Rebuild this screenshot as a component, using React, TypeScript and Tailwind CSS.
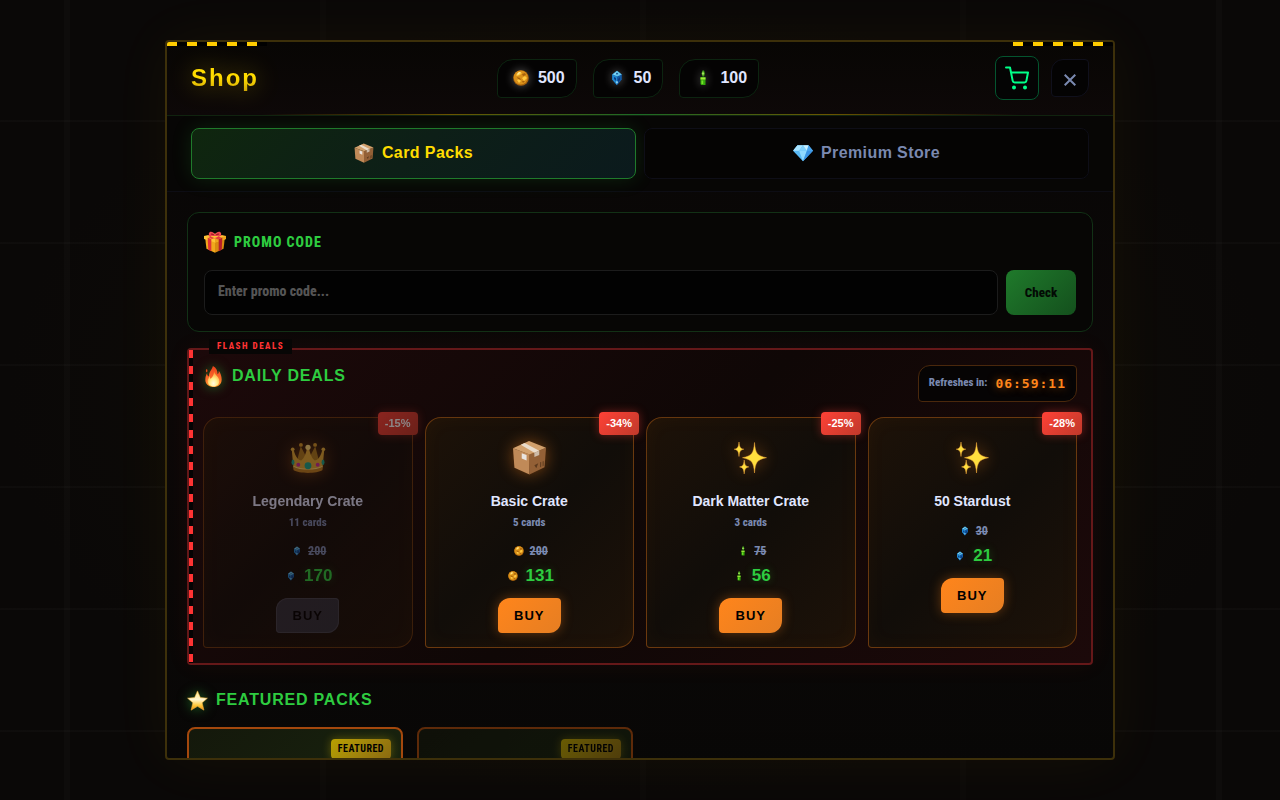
import type { ReactNode } from "react";

type Currency = "coin" | "crystal" | "vial";
type Art = "crown" | "box" | "sparkles";

const narrow = "font-['Roboto_Condensed','Liberation_Sans_Narrow','Liberation_Sans',sans-serif]";

function CurrencyIcon({ kind, className }: { kind: Currency; className: string }) {
  return (
    <svg viewBox="0 0 16 16" className={className} aria-hidden="true">
      {kind === "coin" && (
        <g>
          <circle cx="8" cy="8" r="7.800" fill="#a8620c" />
          <circle cx="7.700" cy="7.500" r="7" fill="#d9901a" />
          <path d="M3 5l3-3 3 1-2 2-3 1zM9 8l3-2 2 2-3 3zM4 10l2-1 2 2-2 2z" fill="#ffc83f" />
          <path d="M4 7l3 1 1 2-3-1zM9 4l3-1 1 2-3 1zM9 11l3 0-2 2z" fill="#a8620c" />
          <path d="M4 4l2-2 2 0-3 3z" fill="#ffeb9c" />
        </g>
      )}
      {kind === "crystal" && (
        <g>
          <path d="M8 .800l4.800 3.700v5L8 15.200 3.200 9.500v-5z" fill="#1159a4" />
          <path d="M8 .800l4.800 3.700L8 6.500 3.200 4.500z" fill="#62c4ea" />
          <path d="M3.200 4.500L8 6.500v8.700L3.200 9.500z" fill="#2288cf" />
          <path d="M5 7l2 1v3L5 9zM9 9l2-2v3l-2 2zM7 3l2 0-1 2z" fill="#0b3a80" />
          <path d="M5 4l2-1-1 2zM7 12l1-1 1 1-1 2z" fill="#a8ecff" />
        </g>
      )}
      {kind === "vial" && (
        <g>
          <path d="M7.500.500h1.500l1 3-1 3h-1.500l-1-3z" fill="#3f9a18" />
          <path d="M8 1.500l.900 2-.900 2-.900-2z" fill="#b8f26a" />
          <path d="M5.500 7h5v8H6.200l-.7-1z" fill="#35a80c" />
          <path d="M5.500 7.500h5v2h-5z" fill="#a2e83a" />
          <path d="M6.500 10.500h1.700v3.500H6.500z" fill="#76e32a" />
        </g>
      )}
    </svg>
  );
}

function BoxIcon({ className }: { className: string }) {
  return (
    <svg viewBox="0 0 36 36" className={className} aria-hidden="true">
      <path d="M1 8.500L18 15v20.500L2.500 28.500z" fill="#c08a58" />
      <path d="M18 15L35 8l-1.500 20L18 35.500z" fill="#936036" />
      <path d="M1 8.500L17.500 1 35 8l-17 7z" fill="#d2a06c" />
      <path d="M9 5l4-2 15 8-5 2z" fill="#eadccb" />
      <path d="M23 13l5-2v4.500l-5 2z" fill="#cdbba8" />
      <path d="M10 13.500l5 2v5.500l-5-2z" fill="#e9e4df" />
      <path d="M23 26l4-2-2 5zM29 23l1-.5v5l-1 .5zM31.500 22l1-.5v5l-1 .5z" fill="#5c3a1e" />
    </svg>
  );
}

function DiamondIcon({ className }: { className: string }) {
  return (
    <svg viewBox="0 0 36 32" className={className} aria-hidden="true">
      <path d="M8 2h20l8 10-18 19L0 12z" fill="#58b9f5" />
      <path d="M8 2l10 0-7 10H0z" fill="#a8e4ff" />
      <path d="M18 2l7 10H11z" fill="#7fd0fb" />
      <path d="M18 2h10l-3 10z" fill="#c8f0ff" />
      <path d="M28 2l8 10H25z" fill="#4aa4ee" />
      <path d="M11 12h14l-7 19z" fill="#8fd9ff" />
      <path d="M25 12h11L18 31z" fill="#3a93e4" />
    </svg>
  );
}

function GiftIcon({ className }: { className: string }) {
  return (
    <svg viewBox="0 0 36 36" className={className} aria-hidden="true">
      <path d="M2 12l16 5v18.500L4 29z" fill="#f0a91c" />
      <path d="M34 12l-16 5v18.500L32 29z" fill="#d98a10" />
      <path d="M0 8l18-4 18 4v5l-18 6L0 13z" fill="#fdc436" />
      <path d="M18 13l18-5v5l-18 6z" fill="#eda41c" />
      <path d="M6 11l6 2v20l-5-2.500z" fill="#e03236" />
      <path d="M30 11l-6 2v20l5-2.500z" fill="#b81f2b" />
      <path d="M6 7l7-2 16 6-6 3zM30 7l-7-2-16 5 6 3z" fill="#e53a3f" />
      <path d="M18 8C12 9 7 8 8 4c1-5 8-3 10 2 2-5 9-7 10-2 1 4-4 5-10 4z" fill="#f04a50" />
      <path d="M11 5c2-2 5 0 6 2-3 0-5 0-6-2zM25 5c-2-2-5 0-6 2 3 0 5 0 6-2z" fill="#a81c28" />
    </svg>
  );
}

function FireIcon({ className }: { className: string }) {
  return (
    <svg viewBox="0 0 32 36" className={className} aria-hidden="true">
      <defs>
        <linearGradient id="flame" x1="0" y1="0" x2="0" y2="1">
          <stop offset="0" stopColor="#e8401c" />
          <stop offset="0.600" stopColor="#fb6a2a" />
          <stop offset="1" stopColor="#ff9a2b" />
        </linearGradient>
        <radialGradient id="flame-core" cx="0.500" cy="0.800" r="0.700">
          <stop offset="0" stopColor="#fffbe0" />
          <stop offset="0.450" stopColor="#ffee8a" />
          <stop offset="1" stopColor="#ff9a32" />
        </radialGradient>
      </defs>
      <path d="M15 0c6 3 8 8 8 14 2-1 2-4 2-6 3 4 5 9 5 15 0 8-6 13-14 13S2 31 2 24c0-5 1-8 3-12 0 3 1 5 3 6 0-8 5-11 7-18z" fill="url(#flame)" />
      <path d="M4 5c2 1 2 3 1 6-2-1-3-3-1-6z" fill="#e64a19" />
      <path d="M17 9c1 7 9 9 9 17 0 5-4 9-10 9S6 31 6 26c0-4 2-5 3-9 1 2 1 4 2 5 4-4 6-7 6-13z" fill="url(#flame-core)" />
    </svg>
  );
}

function StarIcon({ className }: { className: string }) {
  return (
    <svg viewBox="0 0 36 36" className={className} aria-hidden="true">
      <defs>
        <linearGradient id="star" x1="0" y1="0" x2="0" y2="1">
          <stop offset="0" stopColor="#ffe88a" />
          <stop offset="0.450" stopColor="#fff6cf" />
          <stop offset="0.750" stopColor="#ffc93a" />
          <stop offset="1" stopColor="#e58a10" />
        </linearGradient>
      </defs>
      <path d="M18 1.500l5 11.500 12 1-9 8 3 12.500-11-6.500L7 34.500 10 22l-9-8 12-1z" fill="url(#star)" stroke="#eeb040" strokeWidth="1" strokeLinejoin="round" />
    </svg>
  );
}

function CrownIcon() {
  return (
    <svg viewBox="0 0 36 32" className="h-[31px] w-9" aria-hidden="true">
      <path d="M5 26L10.500 4.500 18 19l7.500-14.500L31 26z" fill="#ad7c1e" />
      <path d="M3 27L1.300 8.500 3.500 9C5 16 9 19 11 19c3-2 5-7 6-13h2c1 6 3 11 6 13 2 0 6-3 7.500-10l2.200-.5L33 27c-6 4-24 4-30 0z" fill="#e3ab35" />
      <path d="M3 25c7 4 23 4 30 0v4c-6 4-24 4-30 0z" fill="#c08220" />
      <path d="M3 24.500c7 4 23 4 30 0v1c-7 4-23 4-30 0z" fill="#ffdb74" />
      <circle cx="18" cy="5.500" r="2.700" fill="#ffdf7c" />
      <circle cx="2.200" cy="7.500" r="1.900" fill="#e8b43c" />
      <circle cx="33.800" cy="7.500" r="1.900" fill="#e8b43c" />
      <circle cx="10.700" cy="3" r="2" fill="#d39a2a" />
      <circle cx="25.300" cy="3" r="2" fill="#d39a2a" />
      <circle cx="18" cy="24.500" r="3.500" fill="#18a88c" />
      <circle cx="8" cy="23.500" r="2" fill="#c8309c" />
      <circle cx="28" cy="23.500" r="2" fill="#c8309c" />
      <ellipse cx="2.500" cy="21" rx="1.500" ry="3" fill="#18a88c" />
      <ellipse cx="33.500" cy="21" rx="1.500" ry="3" fill="#18a88c" />
    </svg>
  );
}

function SparklesIcon() {
  return (
    <svg viewBox="0 0 33 33" className="size-[33px]" aria-hidden="true">
      <g fill="#ffdf3e" stroke="#f0a63c" strokeWidth="0.500">
        <path d="M20.500 1.500c.8 10.500 2.500 13.500 12 15.200-9.500 1.700-11.200 4.800-12 15.300-.8-10.500-2.500-13.600-12-15.300 9.500-1.700 11.200-4.700 12-15.200z" />
        <path d="M5 1c.5 5 1.200 6.500 4.800 7.200C6.200 9 5.500 10.500 5 15.500 4.500 10.500 3.800 9 .200 8.200 3.800 7.500 4.500 6 5 1z" />
        <path d="M10.200 19c.5 5 1.200 6.200 4.600 6.900-3.400.7-4.100 2-4.600 7-.5-5-1.200-6.300-4.600-7 3.400-.7 4.100-1.900 4.600-6.900z" />
      </g>
    </svg>
  );
}

function ArtIcon({ art }: { art: Art }) {
  if (art === "crown") return <CrownIcon />;
  if (art === "sparkles") return <SparklesIcon />;
  return <BoxIcon className="size-[35px]" />;
}

const balances: { kind: Currency; amount: number }[] = [
  { kind: "coin", amount: 500 },
  { kind: "crystal", amount: 50 },
  { kind: "vial", amount: 100 },
];

interface Deal {
  name: string;
  cards?: string;
  art: Art;
  kind: Currency;
  was: number;
  now: number;
  off: string;
  soldOut?: boolean;
}

const deals: Deal[] = [
  { name: "Legendary Crate", cards: "11 cards", art: "crown", kind: "crystal", was: 200, now: 170, off: "-15%", soldOut: true },
  { name: "Basic Crate", cards: "5 cards", art: "box", kind: "coin", was: 200, now: 131, off: "-34%" },
  { name: "Dark Matter Crate", cards: "3 cards", art: "sparkles", kind: "vial", was: 75, now: 56, off: "-25%" },
  { name: "50 Stardust", art: "sparkles", kind: "crystal", was: 30, now: 21, off: "-28%" },
];

function Heading({ icon, children }: { icon: ReactNode; children: ReactNode }) {
  return (
    <h2 className="flex items-center gap-2 text-base leading-[22px] font-bold tracking-wider text-[#2ecc40] uppercase">
      {icon}
      {children}
    </h2>
  );
}

function DealCard({ deal }: { deal: Deal }) {
  return (
    <article
      className={`relative flex flex-col items-center rounded-tl-2xl rounded-tr-sm rounded-br-2xl rounded-bl-sm border border-[#ff851b]/35 bg-linear-135 from-[#1d1208] via-[#110d09] to-[#1d1208] px-3 pt-4 pb-[14px] shadow-[inset_0_0_20px_rgba(255,133,27,0.04)] ${deal.soldOut ? "opacity-50" : ""}`}
    >
      <span className="absolute -top-[6px] -right-[6px] rounded bg-linear-135 from-[#ff4136] to-[#c0392b] px-[7px] text-[11px] leading-[23px] font-bold text-white shadow-[0_0_10px_rgba(255,65,54,0.4)]">
        {deal.off}
      </span>
      <div className="flex h-[47px] items-center justify-center drop-shadow-[0_0_8px_rgba(255,133,27,0.45)]">
        <ArtIcon art={deal.art} />
      </div>
      <h3 className="mt-[10px] text-sm leading-5 font-bold text-[#e0e6ff]">{deal.name}</h3>
      {deal.cards && (
        <p className={`mt-1 text-[11px] leading-4 font-extrabold text-[#7a89b0] ${narrow}`}>{deal.cards}</p>
      )}
      <p className="mt-3 flex h-4 items-center gap-[6px] pl-[3px]">
        <CurrencyIcon kind={deal.kind} className="size-[10px]" />
        <s className={`text-xs font-extrabold text-[#7a89b0] ${narrow}`}>{deal.was}</s>
      </p>
      <p className="mt-[6px] flex h-[22px] items-center gap-2 pl-[3px] text-[17px] font-bold text-[#2ecc40] [text-shadow:0_0_8px_rgba(46,204,64,0.3)]">
        <CurrencyIcon kind={deal.kind} className="size-[10px]" />
        {deal.now}
      </p>
      <button
        type="button"
        disabled={deal.soldOut}
        className={`mt-[11px] h-[35px] min-w-[63px] rounded-tl-xl rounded-tr-sm rounded-br-xl rounded-bl-sm text-[13px] font-bold tracking-[1px] text-black ${deal.soldOut ? "bg-[#30303a] inset-ring inset-ring-[#42424c]" : "bg-linear-135 from-[#ff851b] to-[#e67e22] shadow-[0_0_12px_rgba(255,133,27,0.35)]"}`}
      >
        BUY
      </button>
    </article>
  );
}

export default function App() {
  return (
    <div className="relative flex h-screen items-center justify-center overflow-hidden bg-[#0a0807] bg-[radial-gradient(ellipse_at_center,rgba(30,24,2,0.35),transparent_70%)] px-4 font-['Liberation_Sans',Arial,sans-serif]">
      <div
        aria-hidden="true"
        className="absolute inset-0 bg-[repeating-linear-gradient(180deg,transparent_0_120px,rgba(255,255,255,0.02)_120px_122px)]"
      >
        <i className="absolute inset-y-0 left-[5%] w-[6px] bg-white/[0.02]" />
        <i className="absolute inset-y-0 left-1/4 w-[6px] bg-white/[0.012]" />
        <i className="absolute inset-y-0 left-1/2 w-[6px] bg-white/[0.012]" />
        <i className="absolute inset-y-0 left-3/4 w-[6px] bg-white/[0.012]" />
        <i className="absolute inset-y-0 left-[95%] w-[6px] bg-white/[0.02]" />
      </div>

      <main className="relative flex h-[90vh] w-full max-w-[950px] flex-col overflow-hidden rounded border-2 border-[#3d300a] bg-linear-to-b from-[#070605]/95 via-[#0c0808]/95 to-[#080706]/95 shadow-[0_0_60px_rgba(255,204,0,0.05)]">
        <i
          aria-hidden="true"
          className="absolute top-0 left-0 z-10 h-1 w-[100px] bg-[repeating-linear-gradient(90deg,#ffcc00_0_10px,#000_10px_20px)]"
        />
        <i
          aria-hidden="true"
          className="absolute top-0 right-0 z-10 h-1 w-[100px] bg-[repeating-linear-gradient(90deg,#ffcc00_0_10px,#000_10px_20px)]"
        />

        <header className="relative flex shrink-0 items-center justify-between border-b border-[#10230f] bg-linear-to-b from-[#080604] to-[#0d0808] px-6 pt-[14px] pb-[15px]">
          <h1 className="bg-linear-to-b from-[#ffdc00] from-50% to-[#c49a08] bg-clip-text pr-[2px] text-2xl leading-8 font-bold tracking-[2px] text-transparent drop-shadow-[0_0_12px_rgba(255,220,0,0.4)]">
            Shop
          </h1>
          <div className="flex gap-4">
            {balances.map((b) => (
              <div
                key={b.kind}
                className="flex h-[39px] items-center gap-[9px] rounded-tl-2xl rounded-tr-sm rounded-br-2xl rounded-bl-sm border border-[#0c2410] bg-[#040303] pr-[11px] pl-[15px] text-base font-bold text-[#e0e6ff]"
              >
                <CurrencyIcon kind={b.kind} className="size-4 drop-shadow-[0_0_5px_rgba(255,255,255,0.35)]" />
                {b.amount}
              </div>
            ))}
          </div>
          <div className="flex items-center gap-3">
            <button
              type="button"
              aria-label="Cart"
              className="flex size-11 items-center justify-center rounded-lg border border-[#04552f] bg-[#040404] text-[#00ff88]"
            >
              <svg viewBox="0 0 24 24" className="size-6" fill="none" stroke="currentColor" strokeWidth="2" strokeLinecap="round" strokeLinejoin="round">
                <path d="M1 1.500h4l2.700 13.400a2 2 0 0 0 2 1.600h9.700a2 2 0 0 0 2-1.600L23 6.500H6" />
                <circle cx="9" cy="21.500" r="1" fill="currentColor" />
                <circle cx="20" cy="21.500" r="1" fill="currentColor" />
              </svg>
            </button>
            <button
              type="button"
              aria-label="Close"
              className="flex size-[38px] items-center justify-center rounded-tl-xl rounded-tr-sm rounded-br-xl rounded-bl-sm border border-[#10101c] bg-[#040303] text-[#7a89b0]"
            >
              <svg viewBox="0 0 12 12" className="mt-1 size-3" fill="none" stroke="currentColor" strokeWidth="2">
                <path d="M.7.7l10.600 10.600M11.300.7L.7 11.300" />
              </svg>
            </button>
          </div>
          <i
            aria-hidden="true"
            className="absolute inset-x-0 bottom-0 h-px bg-[linear-gradient(90deg,transparent_10%,#6a5500_30%,#1b6a26_50%,#6a5500_70%,transparent_90%)]"
          />
        </header>

        <nav className="flex shrink-0 gap-2 border-b border-[#0d0d14] bg-[#070605] px-6 py-3">
          <button
            type="button"
            className="flex h-[51px] flex-1 items-center justify-center gap-2 rounded-lg border border-[#1f7a2b] bg-linear-135 from-[#0f260e] via-[#0d1f17] to-[#0b1a1d] pb-[2px] text-base font-bold tracking-wide text-[#ffdc00] shadow-[0_0_20px_rgba(46,204,64,0.15)]"
          >
            <BoxIcon className="size-5" />
            Card Packs
          </button>
          <button
            type="button"
            className="flex h-[51px] flex-1 items-center justify-center gap-2 rounded-lg border border-[#0e0e17] bg-[#050403] pb-[2px] text-base font-bold tracking-wide text-[#7a89b0]"
          >
            <DiamondIcon className="h-[18px] w-5" />
            Premium Store
          </button>
        </nav>

        <div className="min-h-0 flex-1 overflow-y-auto p-5 [scrollbar-width:none]">
          <form className="rounded-xl border border-[#123116] bg-[#070605] p-4" onSubmit={(e) => e.preventDefault()}>
            <label
              htmlFor="promo"
              className={`mb-3 flex h-[29px] items-center gap-2 pb-[3px] text-sm font-extrabold tracking-[1px] text-[#2ecc40] uppercase ${narrow}`}
            >
              <GiftIcon className="size-[22px]" />
              Promo code
            </label>
            <div className="flex gap-2">
              <input
                id="promo"
                placeholder="Enter promo code..."
                className={`h-[45px] min-w-0 flex-1 rounded-lg border border-[#1c1c1c] bg-[#020202] px-[13px] pb-[3px] text-sm font-extrabold text-[#e0e6ff] placeholder:text-[#555] ${narrow}`}
              />
              <button
                type="submit"
                className={`w-[70px] rounded-lg bg-linear-135 from-[#1f7a2b] to-[#14501d] text-[13px] font-extrabold text-[#030a04] ${narrow}`}
              >
                Check
              </button>
            </div>
          </form>

          <section className="relative mt-4 rounded border-2 border-[#651819] bg-linear-135 from-[#1c090a] via-[#0f0706] to-[#1c090a] px-[14px] py-[15px] shadow-[0_0_24px_rgba(255,65,54,0.06)]">
            <i
              aria-hidden="true"
              className="absolute inset-y-0 left-0 w-1 bg-[repeating-linear-gradient(180deg,#ff3333_0_8px,#050303_8px_16px)]"
            />
            <span
              className={`absolute -top-[11px] left-5 bg-[#070605] px-2 text-[9px] leading-[15px] font-extrabold tracking-[1.500px] text-[#ff3333] ${narrow}`}
            >
              FLASH DEALS
            </span>
            <div className="mb-[15px] flex items-start justify-between">
              <Heading icon={<FireIcon className="size-[21px] drop-shadow-[0_0_6px_rgba(46,204,64,0.5)]" />}>
                Daily Deals
              </Heading>
              <div className="flex h-[37px] items-center gap-2 rounded-tl-xl rounded-tr-sm rounded-br-xl rounded-bl-sm border border-[#4a280c] bg-[#060404] px-[10px]">
                <span className={`text-[11px] font-extrabold text-[#7a89b0] ${narrow}`}>Refreshes in:</span>
                <time className="font-['DejaVu_Sans_Mono',monospace] text-[13px] font-bold tracking-[1px] text-[#ff851b] [text-shadow:0_0_8px_rgba(255,133,27,0.5)]">
                  06:59:11
                </time>
              </div>
            </div>
            <div className="grid grid-cols-4 gap-3">
              {deals.map((deal) => (
                <DealCard key={deal.name} deal={deal} />
              ))}
            </div>
          </section>

          <section className="mt-6">
            <Heading icon={<StarIcon className="size-[21px] drop-shadow-[0_0_6px_rgba(46,204,64,0.5)]" />}>
              Featured Packs
            </Heading>
            <div className="mt-4 grid grid-cols-[repeat(auto-fill,minmax(200px,1fr))] gap-[14px]">
              {["first", "second"].map((id) => (
                <article
                  key={id}
                  className={`flex min-h-60 items-start justify-end rounded-lg border-2 border-[#a4480d] bg-linear-135 from-[#14180b] to-[#1a2b10] p-[10px] ${id === "second" ? "opacity-55" : ""}`}
                >
                  <span
                    className={`rounded bg-linear-135 from-[#b8a000] to-[#8a6a10] px-[7px] text-[10px] leading-5 font-bold tracking-[0.5px] text-black shadow-[0_0_10px_rgba(255,220,0,0.3)] ${narrow}`}
                  >
                    FEATURED
                  </span>
                </article>
              ))}
            </div>
          </section>
        </div>
      </main>
    </div>
  );
}
